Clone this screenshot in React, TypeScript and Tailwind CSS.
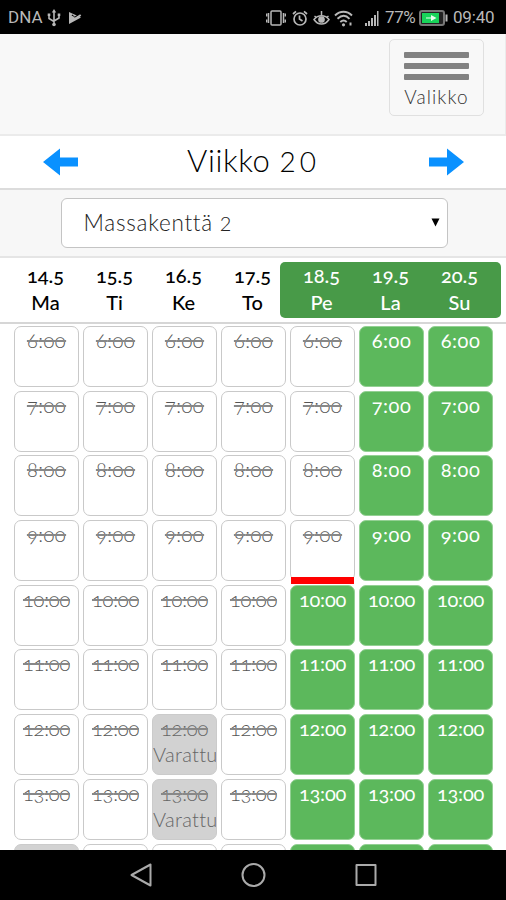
import { clsx } from "clsx"

type SlotState = "past" | "free" | "reserved"

const DAYS = [
  { date: "14.5", name: "Ma" },
  { date: "15.5", name: "Ti" },
  { date: "16.5", name: "Ke" },
  { date: "17.5", name: "To" },
  { date: "18.5", name: "Pe" },
  { date: "19.5", name: "La" },
  { date: "20.5", name: "Su" },
]

const HOURS = [6, 7, 8, 9, 10, 11, 12, 13, 14]
const RESERVED = new Set(["2-12", "2-13", "0-14"])

// current moment: friday, 10:00 is the next bookable hour
const TODAY = 4
const NEXT_HOUR = 10

function slotState(day: number, hour: number): SlotState {
  if (RESERVED.has(`${day}-${hour}`)) return "reserved"
  if (day < TODAY || (day === TODAY && hour < NEXT_HOUR)) return "past"
  return "free"
}

export default function App() {
  return (
    <div className="flex h-[900px] w-[506px] flex-col overflow-hidden bg-white font-['Lato','Liberation_Sans',sans-serif] oldstyle-nums text-black">
      <StatusBar />

      <nav className="flex h-[102px] shrink-0 justify-end border-r border-b-2 border-[#ebebeb] bg-[#f8f8f8] pt-[5px] pr-[21px]">
        <button className="flex h-[77px] w-[95px] flex-col items-center rounded-[5px] border border-[#e0e0e0]">
          <span className="mt-[12px] flex w-[65px] flex-col gap-[5px]">
            <span className="h-[6px] rounded-[1px] bg-[#828282]" />
            <span className="h-[6px] rounded-[1px] bg-[#828282]" />
            <span className="h-[6px] rounded-[1px] bg-[#828282]" />
          </span>
          <span className="mt-[5px] text-[19px] leading-[24px] font-light tracking-[1.1px] text-[#333]">Valikko</span>
        </button>
      </nav>

      <header className="flex h-[54px] shrink-0 items-center justify-between border-b-2 border-[#dcdcdc] pr-[41px] pl-[42px]">
        <Arrow />
        <h1 className="-mt-[3px] text-[31px] font-light tracking-[0.6px]">
          Viikko <span className="text-[28px] tracking-[4px] lining-nums">20</span>
        </h1>
        <Arrow className="rotate-180" />
      </header>

      <div className="flex h-[68px] shrink-0 justify-center border-b-2 border-[#e5e5e5] bg-[#f7f7f7] pt-2 pl-[2px]">
        <div className="flex h-[50px] w-[387px] items-center justify-between rounded-[6px] border border-[#c4c4c4] bg-white pr-[7px] pl-[22px]">
          <span className="text-[22.5px] font-light tracking-[0.75px] text-[#222]">
            Massakenttä <span className="text-[20px] lining-nums">2</span>
          </span>
          <svg className="-mt-[2px]" width="9" height="9" viewBox="0 0 9 9">
            <path d="M0.5 0.5h8L4.5 8.5z" />
          </svg>
        </div>
      </div>

      <DayHeader />

      <main className="min-h-0 flex-1 overflow-hidden pt-[2px] pl-[14px]">
        {HOURS.map((hour) => (
          <div key={hour} className="flex h-[64.7px] gap-[4px]">
            {DAYS.map((day, i) => (
              <Slot key={day.name} hour={hour} state={slotState(i, hour)} now={i === TODAY && hour === NEXT_HOUR - 1} />
            ))}
          </div>
        ))}
      </main>

      <SystemNav />
    </div>
  )
}

function DayHeader() {
  return (
    <div className="flex h-[66px] shrink-0 border-b-2 border-[#d6d6d6] pt-[4px] pl-[11px] text-center text-[20px] leading-[27px] font-medium">
      {DAYS.slice(0, TODAY).map((day) => <DayLabel key={day.name} {...day} />)}
      <div className="-ml-[7px] flex h-[56px] w-[221px] rounded-[5px] bg-[#489a48] pl-[7px] text-white">
        {DAYS.slice(TODAY).map((day) => <DayLabel key={day.name} {...day} />)}
      </div>
    </div>
  )
}

function DayLabel({ date, name }: { date: string; name: string }) {
  return (
    <div className="w-[69px] shrink-0">
      <div>{date}</div>
      <div>{name}</div>
    </div>
  )
}

function Slot({ hour, state, now }: { hour: number; state: SlotState; now: boolean }) {
  return (
    <div
      className={clsx(
        "relative h-[61px] w-[65px] shrink-0 rounded-[7px] border text-center text-[20px] leading-[26px]",
        hour < 10 ? "tracking-[0.5px]" : "tracking-[-0.2px]",
        state === "past" && "border-[#c9c9c9] bg-white font-light text-[#555]",
        state === "reserved" && "border-[#cbcbcb] bg-[#d2d2d2] font-light text-[#666]",
        state === "free" && "border-[#94d094] bg-[#5cb85c] text-white",
      )}
    >
      <div className={clsx(state !== "free" && "line-through decoration-[#888]")}>{hour}:00</div>
      {state === "reserved" && (
        <div className="overflow-hidden text-left tracking-[0.3px] whitespace-nowrap">Varattu</div>
      )}
      {now && <div className="absolute right-0 -bottom-[4px] left-0 h-[7px] bg-[#f00]" />}
    </div>
  )
}

function Arrow({ className }: { className?: string }) {
  return (
    <svg className={className} width="36" height="28" viewBox="0 0 36 28" fill="#0a91ff">
      <path d="M1 14 18 0.5V9.5H36V18.5H18V27.5z" />
    </svg>
  )
}

function StatusBar() {
  return (
    <div className="flex h-[34px] shrink-0 items-center bg-black pt-[2px] pl-[8px] font-[Roboto,sans-serif] text-[17px] text-[#b8b8b8] lining-nums">
      <span className="w-[36px]">DNA</span>
      <svg className="ml-[3px]" width="14" height="18" viewBox="0 0 14 18" fill="none" stroke="#b8b8b8" strokeWidth="1.6">
        <path d="M7 3v12M2 6v3.5l5 3M12 6v3l-5 3" />
        <path d="M7 0 4.8 3.5h4.4z" fill="#b8b8b8" stroke="none" />
        <circle cx="7" cy="15.5" r="1.8" fill="#b8b8b8" stroke="none" />
        <path d="M.7 4.5h2.6v2.6H.7zM10.7 4.5h2.6v2.6h-2.6z" fill="#b8b8b8" stroke="none" />
      </svg>
      <svg className="ml-[7px]" width="14" height="14" viewBox="0 0 14 14">
        <path d="M1 1 13 6.5 1 13z" fill="#b8b8b8" />
        <path d="m4 4 2.5 2.5 6-4" fill="none" stroke="#000" strokeWidth="1.2" />
        <path d="m4 5.5 2.7 2.5 6-4" fill="none" stroke="#b8b8b8" strokeWidth="2" />
      </svg>

      <svg className="ml-[184px]" width="20" height="16" viewBox="0 0 20 16" fill="none" stroke="#b8b8b8" strokeWidth="1.5">
        <rect x="5" y="1" width="10" height="14" rx="1" />
        <path d="M2.5 3v10M17.5 3v10M.6 3.5v3M.6 9.5v3M19.4 3.5v3M19.4 9.5v3" />
      </svg>
      <svg className="ml-[6px]" width="16" height="17" viewBox="0 0 16 17" fill="none" stroke="#b8b8b8" strokeWidth="1.7">
        <circle cx="8" cy="9" r="6" />
        <path d="M7.5 5.5V9l3 2M1 4 4 1.3M15 4l-3-2.7" />
      </svg>
      <svg className="ml-[5px]" width="17" height="16" viewBox="0 0 17 16" fill="none" stroke="#b8b8b8" strokeWidth="1.5">
        <path d="M1 9.5c4-5 11-5 15 0-4 6-11 6-15 0zM8.5 5V1M1.500 6l2 1.500M15.500 6l-2 1.500" />
        <circle cx="8.5" cy="9.5" r="2.6" fill="#b8b8b8" />
      </svg>
      <svg className="ml-[4px]" width="20" height="17" viewBox="0 0 20 17" fill="none" stroke="#b8b8b8" strokeWidth="1.9">
        <path d="M1 5.5c5-5 12-5 17 0M3.5 8.8c4-3.7 8.5-3.7 12 0M6.3 12c2.2-2 4.4-2 6.4 0" />
        <circle cx="9.5" cy="14.8" r="1.6" fill="#b8b8b8" stroke="none" />
        <path d="M16.5 12.5v3" strokeWidth="2" />
      </svg>
      <svg className="ml-[11px]" width="14" height="15" viewBox="0 0 14 15" fill="#b8b8b8">
        <path d="M0 12h2v3H0zM3 10h2v5H3zM6 7h2v8H6zM9 4h2v11H9zM12 0h1.5v15H12z" />
      </svg>
      <span className="ml-[6px] w-[32px] tracking-[-0.4px]">77%</span>
      <svg className="ml-[2px]" width="29" height="16" viewBox="0 0 29 16">
        <rect x="1" y="1" width="24" height="14" rx="2" fill="#222" stroke="#777" strokeWidth="2" />
        <rect x="3" y="3" width="17" height="10" fill="#18d45a" />
        <path d="M26.5 4.5h2v7h-2z" fill="#b8b8b8" />
        <path d="M7 7.5h5V5l5.5 3-5.5 3V8.5H7z" fill="#eafff0" />
      </svg>
      <span className="ml-[5px] tracking-[-0.2px]">09:40</span>
    </div>
  )
}

function SystemNav() {
  return (
    <div className="flex h-[50px] shrink-0 items-center bg-black pl-[130px]">
      <svg width="248" height="26" viewBox="0 0 248 26" fill="none" stroke="#aaa" strokeWidth="2" strokeLinejoin="round">
        <path d="M1.5 13 20.5 2.5v21z" />
        <circle cx="123.5" cy="13" r="11" />
        <rect x="226.5" y="3" width="19" height="20" />
      </svg>
    </div>
  )
}
